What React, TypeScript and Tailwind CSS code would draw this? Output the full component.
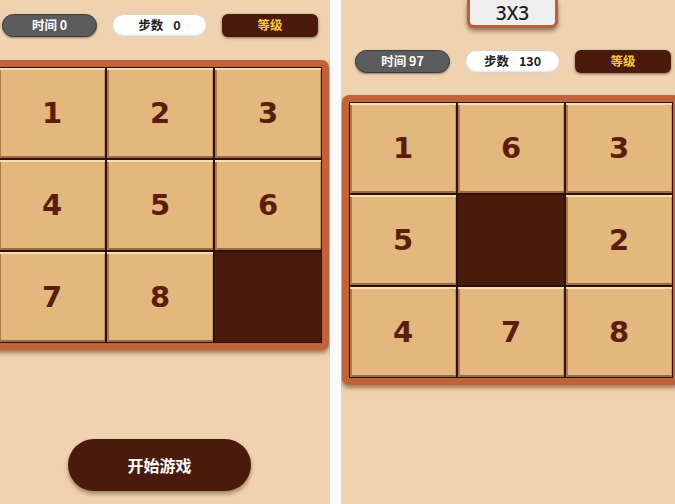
import React from "react";

function Tile({ n }: { n: number | null }) {
  if (n === null) {
    return <div className="bg-[#4a1a0c]" />;
  }
  return (
    <div className="flex items-center justify-center bg-[#e4b77e] shadow-[inset_0_2px_0_#f7dcb4,inset_2px_0_0_#b07846,inset_0_-2px_0_#a06a3c,inset_-1px_0_0_#c8925c]">
      <span className="text-[29px] font-bold leading-none text-[#5a1e0a] font-['DejaVu_Sans',sans-serif]">
        {n}
      </span>
    </div>
  );
}

function Board({ tiles, className }: { tiles: (number | null)[]; className: string }) {
  return (
    <div
      className={
        "w-fit shrink-0 rounded-[7px] bg-[#c0633a] p-[7px] shadow-[0_3px_4px_rgba(90,50,20,0.55)] " +
        className
      }
    >
      <div className="grid w-fit grid-cols-[106px_106px_106px] grid-rows-[90px_90px_90px] gap-[2px] border border-[#2a140a] bg-[#2a140a]">
        {tiles.map((t, i) => (
          <Tile key={i} n={t} />
        ))}
      </div>
    </div>
  );
}

function Pills({ time, steps, className }: { time: number; steps: number; className: string }) {
  return (
    <div className={"flex gap-[15px] font-['Noto_Sans_CJK_SC',sans-serif] " + className}>
      <div className="flex h-[23px] w-[95px] items-center justify-center rounded-full border border-[#3c3c3c] bg-[#5c5c5c] text-[12.5px] font-bold text-white shadow-[0_1px_2px_rgba(0,0,0,0.4)]">
        时间 {time}
      </div>
      <div className="flex h-[23px] w-[95px] items-center justify-center rounded-full border border-[#d8d2cc] bg-white text-[12.5px] font-bold text-[#222] shadow-[inset_0_-1px_2px_rgba(0,0,0,0.12)]">
        <span>步数</span>
        <span className="ml-[10px]">{steps}</span>
      </div>
      <div className="flex h-[23px] w-[96px] items-center justify-center rounded-[6px] bg-[#4a1a0c] text-[12.5px] font-bold text-[#f5c83a] shadow-[0_1px_3px_rgba(0,0,0,0.5)]">
        等级
      </div>
    </div>
  );
}

export default function App() {
  return (
    <div className="flex h-[504px] w-[675px] overflow-hidden bg-[#fafafa]">
      {/* Left panel */}
      <div className="flex h-full w-[330px] shrink-0 flex-col overflow-hidden bg-[#efd2b0] pt-[14px]">
        <Pills time={0} steps={0} className="ml-[2px]" />
        <Board tiles={[1, 2, 3, 4, 5, 6, 7, 8, null]} className="-ml-[9px] mt-[23px]" />
        <button className="ml-[68px] mt-[89px] flex h-[52px] w-[183px] items-center justify-center rounded-full bg-[#4a1a0c] text-[16px] font-bold text-white shadow-[0_3px_4px_rgba(60,30,10,0.45)] font-['Noto_Sans_CJK_SC',sans-serif]">
          开始游戏
        </button>
      </div>
      {/* Right panel */}
      <div className="ml-[11px] flex h-full w-[334px] shrink-0 flex-col overflow-hidden bg-[#efd2b0]">
        <div className="ml-[126px] flex h-[28px] w-[91px] items-center justify-center rounded-b-[7px] border-[3px] border-t-0 border-[#b9603a] bg-[#eeeeee] pt-[1px] shadow-[0_3px_4px_rgba(60,30,10,0.5)]">
          <span className="text-[19px] font-medium leading-[22px] text-[#1a1a1a] font-['Noto_Sans',sans-serif]">3X3</span>
        </div>
        <Pills time={97} steps={130} className="ml-[14px] mt-[22px]" />
        <Board tiles={[1, 6, 3, 5, null, 2, 4, 7, 8]} className="ml-[1px] mt-[22px]" />
      </div>
    </div>
  );
}
